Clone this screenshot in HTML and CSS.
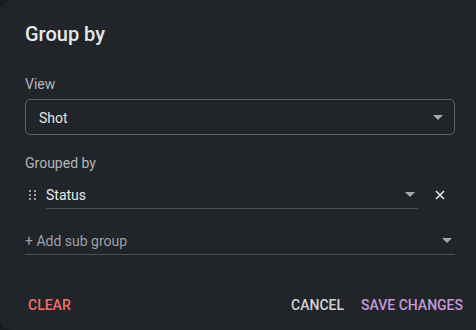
FILE: index.html
```html
<!DOCTYPE html>
<html>
<head>
<meta charset="utf-8">
<link rel="stylesheet" href="styles.css">
</head>
<body>
<div class="dialog">
  <h2 class="title">Group by</h2>
  <div class="field view">
    <div class="label">View</div>
    <div class="select-outlined">
      <span class="value">Shot</span>
      <span class="arrow"></span>
    </div>
  </div>
  <div class="field grouped">
    <div class="label">Grouped by</div>
    <div class="group-row">
      <span class="handle">
        <svg width="8" height="11" viewBox="0 0 8 11"><g fill="#9a9da3"><rect x="0" y="0" width="2" height="2"/><rect x="5" y="0" width="2" height="2"/><rect x="0" y="4" width="2" height="2"/><rect x="5" y="4" width="2" height="2"/><rect x="0" y="8" width="2" height="2"/><rect x="5" y="8" width="2" height="2"/></g></svg>
      </span>
      <div class="select-standard">
        <span class="value">Status</span>
        <span class="arrow"></span>
      </div>
      <span class="close">
        <svg width="10" height="10" viewBox="0 0 10 10"><path d="M1 1L9 9M9 1L1 9" stroke="#e6e6e6" stroke-width="1.6" fill="none"/></svg>
      </span>
    </div>
    <div class="add-row">
      <span class="placeholder">+ Add sub group</span>
      <span class="arrow"></span>
    </div>
  </div>
  <div class="actions">
    <button class="btn btn-clear">Clear</button>
    <div class="right-actions">
      <button class="btn btn-cancel">Cancel</button>
      <button class="btn btn-save">Save changes</button>
    </div>
  </div>
</div>
</body>
</html>
```
FILE: styles.css
```css
html, body {
  margin: 0;
  padding: 0;
  background: #181b20;
  overflow: hidden;
}
body {
  font-family: Roboto, "Liberation Sans", sans-serif;
  width: 476px;
  height: 330px;
}
.dialog {
  width: 476px;
  height: 330px;
  box-sizing: border-box;
  background: #212429;
  border-radius: 12px 0 0 12px;
  padding: 22px 0 0 25px;
  color: #e6e6e6;
}
.title {
  margin: 0;
  font-size: 20px;
  font-weight: 500;
  line-height: 24px;
  color: #e8e8e8;
}
.field {
  width: 430px;
}
.label {
  font-size: 14px;
  line-height: 16px;
  color: #b4b6ba;
}
.view {
  margin-top: 30px;
}
.select-outlined {
  margin-top: 7px;
  height: 36px;
  box-sizing: border-box;
  border: 1px solid #5d6066;
  border-radius: 5px;
  display: flex;
  align-items: center;
  padding: 0 11px 0 13px;
}
.select-outlined .value {
  flex: 1;
  font-size: 14px;
  color: #e6e6e6;
  padding-top: 1px;
}
.arrow {
  width: 0;
  height: 0;
  border-left: 5px solid transparent;
  border-right: 5px solid transparent;
  border-top: 5px solid #a6a8ac;
}
.grouped {
  margin-top: 20px;
}
.group-row {
  margin-top: 10px;
  display: flex;
  align-items: center;
}
.handle {
  width: 21px;
  display: flex;
  padding-left: 4px;
  box-sizing: border-box;
}
.handle svg {
  display: block;
}
.select-standard {
  width: 372px;
  height: 28px;
  box-sizing: border-box;
  border-bottom: 1px solid #4c4f55;
  display: flex;
  align-items: center;
  padding-right: 3px;
}
.select-standard .value {
  flex: 1;
  font-size: 14px;
  color: #e8e8e8;
}
.close {
  margin-left: 17px;
  display: flex;
}
.add-row {
  margin-top: 18px;
  height: 28px;
  box-sizing: border-box;
  border-bottom: 1px solid #4c4f55;
  display: flex;
  align-items: center;
  padding-right: 3px;
}
.placeholder {
  flex: 1;
  font-size: 14px;
  color: #9ea1a6;
}
.actions {
  margin-top: 42px;
  width: 435px;
  margin-left: 3px;
  display: flex;
  justify-content: space-between;
  align-items: center;
}
.right-actions {
  display: flex;
  gap: 17px;
}
.btn {
  background: none;
  border: none;
  padding: 0;
  font-family: Roboto, "Liberation Sans", sans-serif;
  font-size: 14px;
  font-weight: 500;
  text-transform: uppercase;
  line-height: 16px;
  letter-spacing: 0;
}
.btn-clear { color: #ef6f6c; }
.btn-cancel { color: #d2d3d5; }
.btn-save { color: #c59ad6; }
```
